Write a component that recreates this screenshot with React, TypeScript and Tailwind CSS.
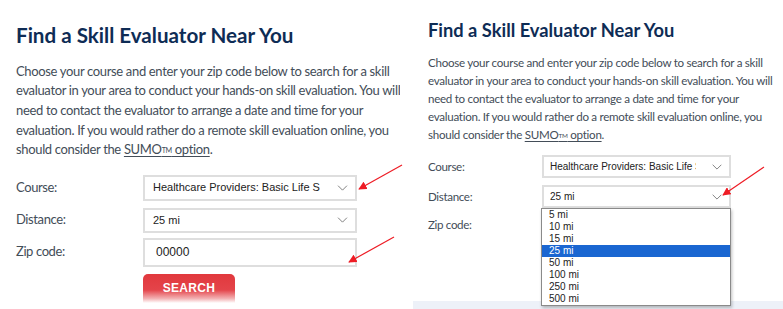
import React from "react";

const leftLines = [
  "Choose your course and enter your zip code below to search for a skill",
  "evaluator in your area to conduct your hands-on skill evaluation. You will",
  "need to contact the evaluator to arrange a date and time for your",
  "evaluation. If you would rather do a remote skill evaluation online, you",
];

const distances = ["5 mi", "10 mi", "15 mi", "25 mi", "50 mi", "100 mi", "250 mi", "500 mi"];

const arial = { fontFamily: '"Liberation Sans", Arial, sans-serif' };

function Chevron({ className }: { className?: string }) {
  return (
    <svg viewBox="0 0 12 7" className={className} fill="none" stroke="#7a7a7a" strokeWidth="1.1">
      <path d="M0.8 0.8 L6 6 L11.2 0.8" />
    </svg>
  );
}

function FakeSelect({ value, h, small }: { value: string; h: string; small?: boolean }) {
  return (
    <div
      className={`flex items-center border-2 border-[#dedede] bg-white ${h} ${
        small ? "pl-[6px] pr-[7px]" : "pl-[8px] pr-[7px]"
      }`}
    >
      <span
        className={`overflow-hidden whitespace-nowrap text-[#222] ${
          small ? "w-[146px] text-[10px]" : "w-[167px] text-[11px]"
        }`}
        style={arial}
      >
        {value}
      </span>
      <Chevron className={small ? "ml-auto w-[10px] h-[6px]" : "ml-auto w-[11px] h-[6px]"} />
    </div>
  );
}

function Intro({ small }: { small?: boolean }) {
  return (
    <p
      className={`whitespace-nowrap text-[#434d58] ${
        small
          ? "text-[11.6px] leading-[18px] tracking-[-0.28px]"
          : "text-[13px] leading-[19.7px] tracking-[-0.34px]"
      }`}
    >
      {leftLines.map((l) => (
        <React.Fragment key={l}>
          {l}
          <br />
        </React.Fragment>
      ))}
      should consider the{" "}
      <span className="underline underline-offset-2">
        SUMO<sup className="text-[0.55em] relative -top-[0.2em]">TM</sup> option
      </span>
      .
    </p>
  );
}

function SearchButton({ className }: { className?: string }) {
  return (
    <div
      className={`flex items-center justify-center rounded-t-[5px] text-white font-bold tracking-[0.3px] bg-[linear-gradient(to_bottom,#e1383d_0%,#e4444a_55%,#f3b3b5_85%,#ffffff_100%)] ${className}`}
      style={arial}
    >
      SEARCH
    </div>
  );
}

export default function App() {
  return (
    <div
      className="relative flex w-[783px] h-[309px] overflow-hidden bg-white"
      style={{ fontFamily: 'Lato, "Noto Sans", sans-serif' }}
    >
      {/* left screenshot */}
      <div className="w-[400px] shrink-0 overflow-hidden pl-4 pt-[22px]">
        <h1 className="text-[20.6px] leading-[26px] font-bold text-[#0e2c55] whitespace-nowrap">
          Find a Skill Evaluator Near You
        </h1>
        <div className="mt-[13.5px]">
          <Intro />
        </div>
        <div className="mt-[14.5px] flex flex-col text-[13px] tracking-[-0.4px] text-[#434d58]">
          <div className="flex items-center">
            <span className="w-[127px]">Course:</span>
            <div className="w-[214px] tracking-normal">
              <FakeSelect value="Healthcare Providers: Basic Life Support" h="h-[26px]" />
            </div>
          </div>
          <div className="flex items-center mt-[7px]">
            <span className="w-[127px]">Distance:</span>
            <div className="w-[214px] tracking-normal">
              <FakeSelect value="25 mi" h="h-[25px]" />
            </div>
          </div>
          <div className="flex items-center mt-[5px]">
            <span className="w-[127px]">Zip code:</span>
            <div
              className="w-[214px] h-[29px] border-2 border-[#dedede] flex items-center pl-[11px] text-[12px] tracking-normal text-[#222]"
              style={arial}
            >
              00000
            </div>
          </div>
          <div className="flex mt-[7px] tracking-normal">
            <span className="w-[127px]" />
            <SearchButton className="w-[92px] h-[29px] text-[12px]" />
          </div>
        </div>
      </div>

      <div className="w-[13px] shrink-0" />

      {/* right screenshot */}
      <div className="flex-1 flex flex-col">
        <div className="flex-1 pl-[15px] pt-[19px]">
          <h1 className="text-[18.3px] leading-[22px] font-bold text-[#0e2c55] whitespace-nowrap">
            Find a Skill Evaluator Near You
          </h1>
          <div className="mt-[13px]">
            <Intro small />
          </div>
          <div className="mt-[11px] flex flex-col text-[11.6px] tracking-[-0.35px] text-[#434d58]">
            <div className="flex items-center">
              <span className="w-[114px]">Course:</span>
              <div className="w-[189px] tracking-normal">
                <FakeSelect value="Healthcare Providers: Basic Life Support" h="h-[23px]" small />
              </div>
            </div>
            <div className="flex items-center mt-[7px]">
              <span className="w-[114px]">Distance:</span>
              <div className="relative w-[189px] tracking-normal">
                <FakeSelect value="25 mi" h="h-[23px]" small />
                <div
                  className="absolute left-[-1px] top-full z-10 w-[190px] border border-[#8a8a8a] bg-white shadow-[1px_2px_3px_rgba(0,0,0,0.25)] text-[10px] leading-[12px] text-[#222]"
                  style={arial}
                >
                  {distances.map((d) => (
                    <div
                      key={d}
                      className={`h-[12px] pl-[7px] ${d === "25 mi" ? "bg-[#1a66d1] text-white" : ""}`}
                    >
                      {d}
                    </div>
                  ))}
                </div>
              </div>
            </div>
            <div className="flex items-center mt-[4px]">
              <span className="w-[114px]">Zip code:</span>
              <div className="w-[189px] h-[25px] border-2 border-[#dedede]" />
            </div>
            <div className="flex mt-[6px] tracking-normal">
              <span className="w-[113px]" />
              <SearchButton className="w-[82px] h-[26px] text-[11px]" />
            </div>
          </div>
        </div>
        <div className="h-[8px] bg-[#edf1f8]" />
      </div>

      {/* red annotation arrows */}
      <svg className="absolute inset-0 pointer-events-none" width="783" height="309">
        <defs>
          <marker id="ah" viewBox="0 0 10 10" refX="9" refY="5" markerWidth="7" markerHeight="7" orient="auto">
            <path d="M0 0 L10 5 L0 10 z" fill="#ee1c25" />
          </marker>
        </defs>
        <line x1="402" y1="165" x2="359" y2="189" stroke="#ee1c25" strokeWidth="1.2" markerEnd="url(#ah)" />
        <line x1="394" y1="237" x2="349" y2="262" stroke="#ee1c25" strokeWidth="1.2" markerEnd="url(#ah)" />
        <line x1="764" y1="167" x2="723" y2="195" stroke="#ee1c25" strokeWidth="1.2" markerEnd="url(#ah)" />
      </svg>
    </div>
  );
}
